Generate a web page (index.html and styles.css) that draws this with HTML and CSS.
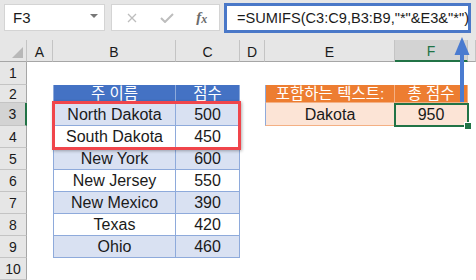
FILE: index.html
```html
<!DOCTYPE html>
<html lang="ko">
<head>
  <meta charset="UTF-8" />
  <title>SUMIFS 텍스트 포함</title>
  <link rel="stylesheet" href="styles.css">
</head>
<body>
  <div class="screen">

    <div class="toolbar">
      <div class="namebox"><span>F3</span><span class="caret"></span></div>
      <div class="buttons">
        <span class="icon">
          <svg width="10" height="10" viewBox="0 0 10 10"><path d="M1 1 L9 9 M9 1 L1 9" stroke="#bdbdbd" stroke-width="1.3" fill="none"/></svg>
        </span>
        <span class="icon">
          <svg width="14" height="10" viewBox="0 0 14 10"><path d="M1 5 L5 9 L13 1" stroke="#bdbdbd" stroke-width="2" fill="none"/></svg>
        </span>
        <span class="icon fx"><i>f</i><i class="sub">x</i></span>
      </div>
      <div class="formula">=SUMIFS(C3:C9,B3:B9,"*"&amp;E3&amp;"*")</div>
    </div>

    <div class="sheet">
      <div class="row head">
        <div class="corner"><span class="tri"></span></div>
        <div class="ch">A</div>
        <div class="ch">B</div>
        <div class="ch">C</div>
        <div class="ch">D</div>
        <div class="ch">E</div>
        <div class="ch active">F</div>
        <div class="ch"></div>
      </div>

      <div class="row r1">
        <div class="rh">1</div>
      </div>

      <div class="row r2">
        <div class="rh">2</div><div></div>
        <div class="cell blue-head first">주 이름</div>
        <div class="cell blue-head">점수</div>
        <div></div>
        <div class="cell orange-head first">포함하는 텍스트:</div>
        <div class="cell orange-head">총 점수</div>
      </div>

      <div class="row r3">
        <div class="rh active">3</div><div></div>
        <div class="cell band first">North Dakota</div>
        <div class="cell band">500</div>
        <div></div>
        <div class="cell peach first">Dakota</div>
        <div class="cell peach">950</div>
      </div>

      <div class="row">
        <div class="rh">4</div><div></div>
        <div class="cell plain first">South Dakota</div>
        <div class="cell plain">450</div>
      </div>

      <div class="row">
        <div class="rh">5</div><div></div>
        <div class="cell band first">New York</div>
        <div class="cell band">600</div>
      </div>

      <div class="row">
        <div class="rh">6</div><div></div>
        <div class="cell plain first">New Jersey</div>
        <div class="cell plain">550</div>
      </div>

      <div class="row">
        <div class="rh">7</div><div></div>
        <div class="cell band first">New Mexico</div>
        <div class="cell band">390</div>
      </div>

      <div class="row">
        <div class="rh">8</div><div></div>
        <div class="cell plain first">Texas</div>
        <div class="cell plain">420</div>
      </div>

      <div class="row">
        <div class="rh">9</div><div></div>
        <div class="cell band first">Ohio</div>
        <div class="cell band">460</div>
      </div>

      <div class="row">
        <div class="rh">10</div>
      </div>
    </div>

    <!-- overlays -->
    <div class="callout"></div>
    <div class="selection"><span class="handle"></span></div>
    <svg class="arrow" width="18" height="68" viewBox="0 0 18 68">
      <polygon points="9,2 1.5,20 16.5,20" fill="#4a7bd0"/>
      <rect x="7" y="19" width="4" height="48" fill="#4a7bd0"/>
    </svg>

  </div>
</body>
</html>
```

FILE: styles.css
```css
body {
  margin: 0;
  background: #e6e6e6;
  font-family: "Liberation Sans", "Noto Sans CJK KR", sans-serif;
  color: #1a1a1a;
}
.screen {
  position: relative;
  width: 476px;
  height: 280px;
  overflow: hidden;
}

/* formula bar */
.toolbar {
  display: flex;
  align-items: flex-start;
  height: 40px;
  padding: 4px 0 0 4px;
  box-sizing: border-box;
}
.namebox {
  display: flex;
  align-items: center;
  justify-content: space-between;
  width: 101px;
  height: 27px;
  padding: 0 6px 0 8px;
  box-sizing: border-box;
  background: #fff;
  border: 1px solid #d4d4d4;
  font-size: 15px;
}
.caret {
  width: 0;
  height: 0;
  border-left: 4px solid transparent;
  border-right: 4px solid transparent;
  border-top: 4px solid #777;
  margin-bottom: 3px;
}
.buttons {
  display: flex;
  align-items: center;
  width: 109px;
  height: 27px;
  margin-left: 6px;
  padding-left: 3px;
  box-sizing: border-box;
  background: #fff;
  border: 1px solid #d4d4d4;
}
.icon {
  display: flex;
  justify-content: center;
  align-items: center;
  width: 35px;
}
.fx {
  font-family: "Liberation Serif", serif;
  color: #6b6b6b;
  font-size: 15px;
  font-weight: bold;
}
.fx .sub {
  font-size: 12px;
  margin-top: 3px;
}
.formula {
  width: 247px;
  height: 30px;
  margin: -1px 0 0 4px;
  padding-left: 10px;
  box-sizing: border-box;
  background: #fff;
  border: 3px solid #4a78c8;
  font-size: 14.6px;
  line-height: 24px;
  white-space: nowrap;
}

/* grid */
.sheet {
  background: #fff;
}
.row {
  display: grid;
  grid-template-columns: 27px 26px 123px 64px 25px 130px 73px 1fr;
  height: 22px;
}
.row.head { height: 22px; background: #e6e6e6; }
.row.r1 { height: 23px; }
.row.r2 { height: 18px; }
.row.r3 { height: 23px; }

.corner {
  position: relative;
  border-right: 1px solid #c4c4c4;
  border-bottom: 1px solid #a6a6a6;
}
.tri {
  position: absolute;
  right: 3px;
  bottom: 3px;
  width: 0;
  height: 0;
  border-left: 11px solid transparent;
  border-bottom: 11px solid #b8b8b8;
}
.ch {
  display: flex;
  justify-content: center;
  align-items: center;
  padding-top: 2px;
  font-size: 14px;
  border-right: 1px solid #c4c4c4;
  border-bottom: 1px solid #a6a6a6;
  box-sizing: border-box;
}
.ch.active {
  background: #d3d3d3;
  color: #217346;
  border-bottom: 2px solid #217346;
}
.rh {
  display: flex;
  justify-content: center;
  align-items: center;
  font-size: 14px;
  background: #e6e6e6;
  border-right: 1px solid #a6a6a6;
  border-bottom: 1px solid #c4c4c4;
  box-sizing: border-box;
}
.rh.active {
  background: #d3d3d3;
  border-right: 2px solid #217346;
}

/* table cells */
.cell {
  display: flex;
  justify-content: center;
  align-items: flex-end;
  overflow: hidden;
  font-size: 16px;
  line-height: 20px;
  white-space: nowrap;
  box-sizing: border-box;
  border-right: 1px solid #8eaadb;
  border-bottom: 1px solid #8eaadb;
}
.cell.first { border-left: 1px solid #8eaadb; }
.blue-head {
  align-items: center;
  background: #4472c4;
  color: #fff;
  font-size: 15.5px;
  line-height: 17px;
}
.band { background: #d9e1f2; }
.plain { background: #fff; }
.orange-head {
  align-items: center;
  background: #ed7d31;
  color: #fff;
  font-size: 15.5px;
  line-height: 17px;
  border-color: #f4b084;
}
.peach {
  background: #fce4d6;
  border-color: #f4b084;
}

/* overlays */
.callout {
  position: absolute;
  left: 52px;
  top: 101px;
  width: 189px;
  height: 49px;
  box-sizing: border-box;
  border: 3px solid #f0454b;
  box-shadow: 1px 1px 3px rgba(0, 0, 0, 0.3);
}
.selection {
  position: absolute;
  left: 394px;
  top: 103px;
  width: 75px;
  height: 24px;
  box-sizing: border-box;
  border: 2px solid #217346;
}
.handle {
  position: absolute;
  right: -5px;
  bottom: -5px;
  width: 6px;
  height: 6px;
  background: #217346;
  border: 1px solid #fff;
}
.arrow {
  position: absolute;
  left: 453px;
  top: 35px;
}
```
